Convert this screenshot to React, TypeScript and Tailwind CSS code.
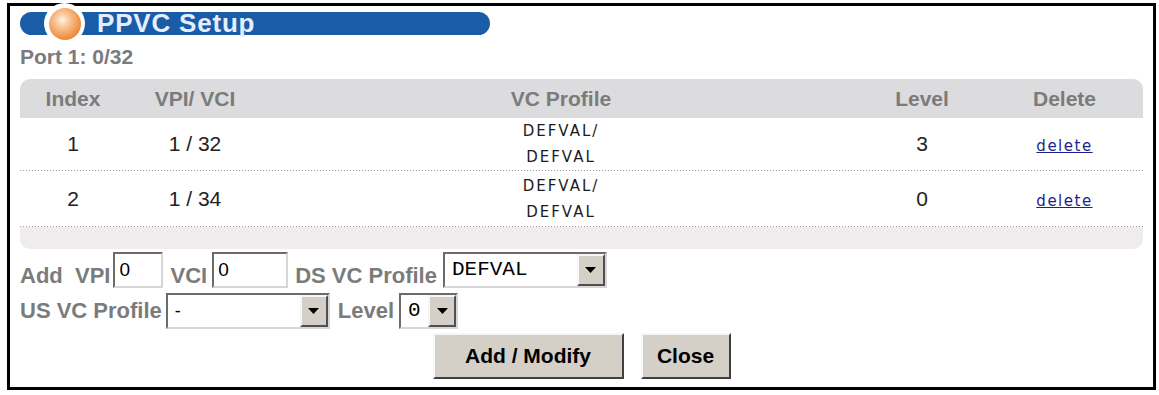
import React from "react";

const sans = "font-['Liberation_Sans',Arial,sans-serif]";
const pixel = "font-['DejaVu_Sans',Verdana,sans-serif]";

function Arrow() {
  return (
    <span className="flex h-full w-[28px] shrink-0 items-center justify-center border-2 border-t-[#f6f6f6] border-l-[#f6f6f6] border-r-[#505050] border-b-[#505050] bg-[#d4d0c8]">
      <svg width="11" height="6" viewBox="0 0 11 6">
        <path d="M0 0h11L5.5 6z" fill="#000" />
      </svg>
    </span>
  );
}

function Select({ width, value, mono }: { width: string; value: string; mono?: boolean }) {
  return (
    <div
      className={`flex h-[36px] items-stretch border-2 border-t-[#6b6b6b] border-l-[#6b6b6b] border-r-[#d6d6d6] border-b-[#d6d6d6] bg-white font-normal ${width}`}
    >
      <span
        className={`flex flex-1 items-center pl-[7px] text-black ${
          mono ? "font-['Liberation_Mono','Courier_New',monospace] text-[21px]" : `${sans} text-[18px]`
        }`}
      >
        {value}
      </span>
      <Arrow />
    </div>
  );
}

function Input({ width }: { width: string }) {
  return (
    <div
      className={`flex h-[36px] items-center border-2 border-t-[#6b6b6b] border-l-[#6b6b6b] border-r-[#d6d6d6] border-b-[#d6d6d6] bg-white pl-[4px] text-[19px] font-normal text-black ${sans} ${width}`}
    >
      0
    </div>
  );
}

function Dots() {
  return <div className="h-px bg-[linear-gradient(to_right,#9c9c9c_1px,transparent_1px)] bg-[length:3px_1px]" />;
}

const rows = [
  { index: "1", vpi: "1 / 32", level: "3", h: "h-[52px]" },
  { index: "2", vpi: "1 / 34", level: "0", h: "h-[55px]" },
];

const cols = "grid grid-cols-[106px_138px_594px_128px_157px] items-center text-center";

export default function App() {
  return (
    <div className={`h-[395px] w-[1159px] bg-white pl-[7px] pt-[3px] ${sans}`}>
      <div className="flex h-[387px] w-[1149px] flex-col border-[3px] border-black px-[10px]">
        {/* title bar */}
        <div className="relative mt-[6px] h-[23px] w-[470px] shrink-0 rounded-full bg-[#1b5ca6]">
          <div className="absolute left-[24px] top-[-9px] h-[41px] w-[41px] rounded-full bg-white" />
          <div className="absolute left-[29px] top-[-4px] h-[32px] w-[32px] rounded-full bg-[radial-gradient(circle_at_42%_38%,#fff3e6_0%,#f8c08e_30%,#ef8a3c_70%,#d9671c_100%)]" />
          <div className="relative pl-[77px] text-[26px] font-bold leading-[23px] tracking-[0.8px] text-[#e4eeff]">
            PPVC Setup
          </div>
        </div>

        <div className="mt-[10px] h-[24px] text-[21px] font-bold leading-[24px] text-[#7b7b7b]">Port 1: 0/32</div>

        {/* table */}
        <div className="mt-[10px] w-[1123px] overflow-hidden rounded-[10px] bg-[#efebef]">
          <div className={`${cols} h-[39px] bg-[#dcdcde] text-[21px] font-bold text-[#7b7b7b]`}>
            <span>Index</span>
            <span>VPI/ VCI</span>
            <span>VC Profile</span>
            <span>Level</span>
            <span>Delete</span>
          </div>
          {rows.map((r) => (
            <div key={r.index} className="bg-white">
              <div className={`${cols} ${r.h} text-[21px] text-[#222]`}>
                <span>{r.index}</span>
                <span>{r.vpi}</span>
                <span className={`${pixel} text-[15px] leading-[26px] tracking-[2px] text-[#1c1c1c]`}>
                  DEFVAL/
                  <br />
                  DEFVAL
                </span>
                <span>{r.level}</span>
                <span>
                  <a className={`${pixel} text-[15px] tracking-[1.5px] text-[#1e1e8c] underline`}>delete</a>
                </span>
              </div>
              <Dots />
            </div>
          ))}
          <div className="h-[22px]" />
        </div>

        {/* form row 1 */}
        <div className="mt-[3px] flex h-[36px] items-end text-[22px] font-bold leading-[24px] text-[#7b7b7b]">
          <span>Add&nbsp; VPI</span>
          <Input width="ml-[3px] w-[50px]" />
          <span className="ml-[7px]">VCI</span>
          <Input width="ml-[5px] w-[76px]" />
          <span className="ml-[7px]">DS VC Profile</span>
          <Select width="ml-[6px] w-[164px]" value="DEFVAL" mono />
        </div>

        {/* form row 2 */}
        <div className="mt-[5px] flex h-[36px] items-center text-[22px] font-bold leading-[24px] text-[#7b7b7b]">
          <span>US VC Profile</span>
          <Select width="ml-[4px] w-[164px]" value="-" />
          <span className="ml-[8px]">Level</span>
          <Select width="ml-[5px] w-[59px]" value="0" mono />
        </div>

        {/* buttons */}
        <div className="mt-[4px] flex justify-center gap-[17px]">
          <button className="h-[46px] w-[191px] border-2 border-t-[#f6f6f6] border-l-[#f6f6f6] border-r-[#404040] border-b-[#404040] bg-[#d4d0c8] text-[21px] font-bold text-black">
            Add / Modify
          </button>
          <button className="h-[46px] w-[90px] border-2 border-t-[#f6f6f6] border-l-[#f6f6f6] border-r-[#404040] border-b-[#404040] bg-[#d4d0c8] text-[21px] font-bold text-black">
            Close
          </button>
        </div>
      </div>
    </div>
  );
}
